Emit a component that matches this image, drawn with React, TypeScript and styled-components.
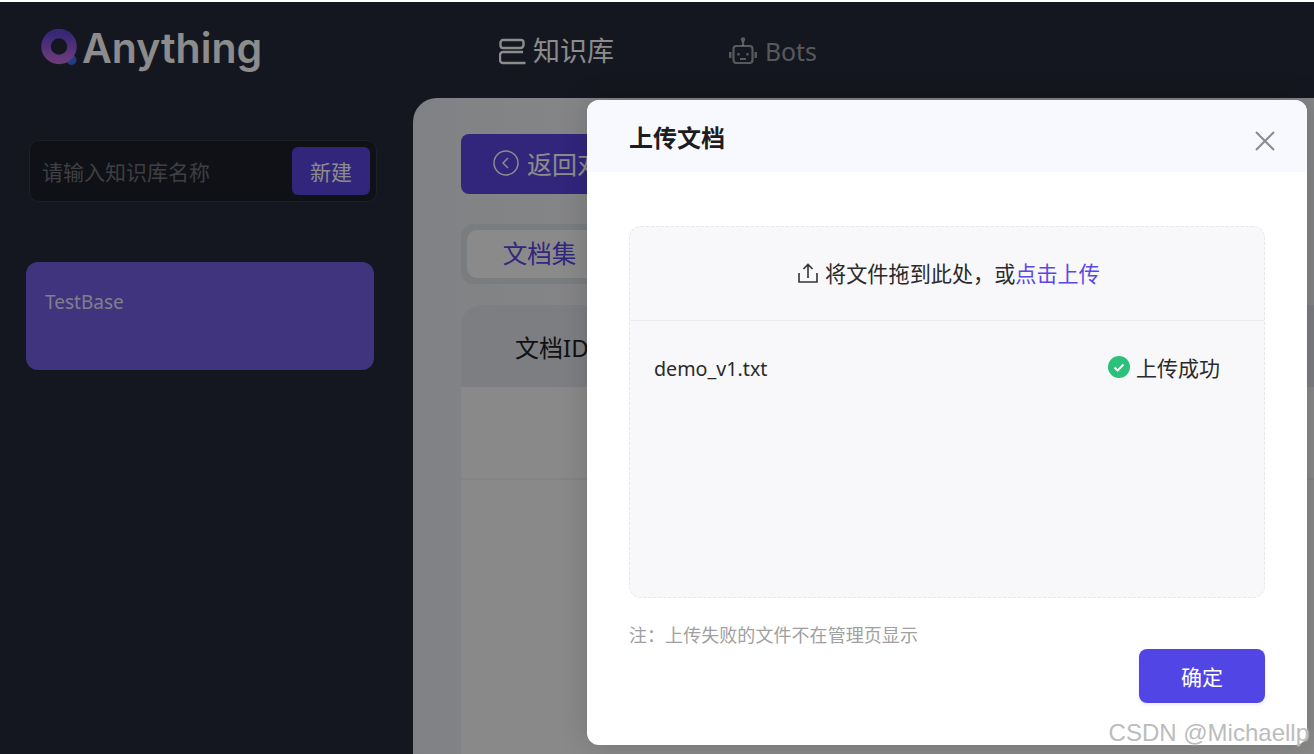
import React from 'react';
import styled, { createGlobalStyle } from 'styled-components';

const Global = createGlobalStyle`
  html, body { margin: 0; padding: 0; height: 754px; overflow: hidden; background: #fff; }
  * { box-sizing: border-box; }
  body { font-family: "Noto Sans", "Noto Sans CJK SC", sans-serif; }
`;
const Page = styled.div`
  position: relative; width: 1314px; height: 754px; padding-top: 2px; background: #fff; overflow: hidden;
  display: flex; flex-direction: column;
`;
const Shell = styled.div`flex: 1; display: flex; flex-direction: column; background: #252a3a; min-height: 0;`;
const Header = styled.header`height: 96px; display: flex; align-items: flex-start; flex: none;`;
const Brand = styled.div`width: 499px; padding: 27px 0 0 41px; display: flex; align-items: center; gap: 4px; flex: none;`;
const LogoMark = styled.svg`margin-bottom: 4px; flex: none;`;
const BrandName = styled.span`font: 600 41px/40px Inter, "Noto Sans", sans-serif; color: #fff; position: relative; top: -1px;`;
const NavItem = styled.div<{ $active?: boolean; $w: number }>`
  width: ${p => p.$w}px; padding-top: 31px; display: flex; align-items: center; gap: ${p => (p.$active ? 7 : 8)}px; flex: none;
  color: ${p => (p.$active ? '#fff' : 'rgba(255,255,255,.58)')};
  font: 400 ${p => (p.$active ? 27 : 24.8)}px/36px "Noto Sans", "Noto Sans CJK SC", sans-serif;
  svg { flex: none; }
`;
const Main = styled.div`flex: 1; display: flex; min-height: 0;`;
const Sidebar = styled.aside`width: 413px; flex: none; padding: 42px 37px 0 26px; display: flex; flex-direction: column; gap: 60px;`;
const Search = styled.div`
  margin-left: 3px; width: 348px; height: 62px; padding: 0 6px 0 12px; border: 1px solid #343946; border-radius: 10px;
  background: #1d2029; display: flex; align-items: center; justify-content: space-between; flex: none;
`;
const Placeholder = styled.span`font-size: 21px; color: rgba(255,255,255,.38);`;
const NewBtn = styled.div`width: 78px; height: 48px; border-radius: 6px; background: #5a44e2; color: #fff; font-size: 21px; display: flex; align-items: center; justify-content: center;`;
const BaseCard = styled.div`width: 348px; height: 108px; border-radius: 12px; background: #7560e8; padding: 25px 19px; font-size: 19px; line-height: 30px; color: rgba(255,255,255,.85); flex: none;`;
const Panel = styled.section`flex: 1; min-width: 0; background: linear-gradient(90deg, #e9ecf2, #f1f2f5 160px); border-radius: 24px 0 0 0; padding: 36px 0 0 48px; display: flex; flex-direction: column; overflow: hidden;`;
const BackBtn = styled.div`width: 220px; height: 60px; padding: 0 0 2px 32px; flex: none; border-radius: 8px; background: #5a44e2; color: #fff; font-size: 25px; display: flex; align-items: center; gap: 8px;`;
const Tabs = styled.div`margin-top: 30px; width: 300px; height: 60px; flex: none; padding: 6px; background: #dfe3ea; border-radius: 12px;`;
const Tab = styled.div`width: 145px; height: 48px; padding-bottom: 3px; border-radius: 10px; background: #fcfcfc; color: #5a47e5; font-size: 24.500px; display: flex; align-items: center; justify-content: center;`;
const Table = styled.div`margin-top: 21px; flex: 1; background: #f9f9f9; border-radius: 20px 0 0 0; overflow: hidden; display: flex; flex-direction: column;`;
const THead = styled.div`height: 82px; flex: none; background: #e3e6ed; padding-left: 54px; display: flex; align-items: center; font-size: 24px; color: #222; span { white-space: nowrap; }`;
const TRow = styled.div`height: 93px; flex: none; border-bottom: 2px solid #efefef;`;
const Scrim = styled.div`position: absolute; inset: 2px 0 0 0; background: rgba(0,0,0,.45);`;
const Modal = styled.div`
  position: absolute; left: 587px; top: 100px; width: 720px; height: 645px; background: #fff; border-radius: 12px; overflow: hidden;
  box-shadow: 0 0 30px rgba(0,0,0,.16); display: flex; flex-direction: column;
`;
const ModalHead = styled.div`height: 72px; flex: none; background: #f8f9fe; padding: 0 32px 0 42px; display: flex; align-items: center; justify-content: space-between;`;
const ModalTitle = styled.h2`margin: 0; font-size: 24px; line-height: 36px; font-weight: 700; color: #1d1d1f; position: relative; top: 2px;`;
const CloseIcon = styled.svg`width: 20px; height: 20px; position: relative; top: 5px;`;
const ModalBody = styled.div`flex: 1; padding: 54px 42px 0; display: flex; flex-direction: column; min-height: 0;`;
const Drop = styled.div`height: 372px; flex: none; border: 1px dashed #e7e8ec; border-radius: 12px; background: #f8f8fb; display: flex; flex-direction: column;`;
const DropHint = styled.div`height: 94px; flex: none; padding: 0 0 2px 4px; border-bottom: 1px solid #ebecef; display: flex; align-items: center; justify-content: center; gap: 7px; font-size: 21.150px; color: #2a2a2a;`;
const Link = styled.span`color: #5a47e5;`;
const FileRow = styled.div`height: 94px; display: flex; align-items: center; justify-content: space-between; padding: 0 44px 0 24px; color: #2a2a2a;`;
const FileName = styled.span`font-size: 19.700px;`;
const FileStatus = styled.span`display: flex; align-items: center; gap: 6px; font-size: 21px; padding-bottom: 3px;`;
const Note = styled.div`margin-top: 24px; font-size: 18px; line-height: 27px; color: #a0a0a0; flex: none; letter-spacing: .06px;`;
const Footer = styled.div`display: flex; justify-content: flex-end;`;
const Confirm = styled.div`width: 126px; height: 54px; padding-bottom: 1px; border-radius: 8px; background: #5146e5; color: #fff; font-size: 21px; display: flex; align-items: center; justify-content: center; box-shadow: 0 2px 3px rgba(120,140,255,.15);`;
const Watermark = styled.div`position: absolute; right: 5px; bottom: 7px; font: 400 24px/28px "Liberation Sans", sans-serif; color: #bcbcbc; text-shadow: 0 0 2px rgba(255,255,255,.9); white-space: nowrap;`;

export default function App() {
  return (
    <Page>
      <Global />
      <Shell>
        <Header>
          <Brand>
            <LogoMark width="37" height="36" viewBox="0 0 37 36">
              <defs>
                <linearGradient id="q" x1="0" y1="0" x2="0" y2="1">
                  <stop offset="0" stopColor="#6448d8" />
                  <stop offset="1" stopColor="#c06adf" />
                </linearGradient>
              </defs>
              <circle cx="30.500" cy="31" r="5" fill="#3d70f5" />
              <circle cx="18" cy="17.500" r="13" fill="none" stroke="url(#q)" strokeWidth="9.500" />
            </LogoMark>
            <BrandName>Anything</BrandName>
          </Brand>
          <NavItem $active $w={230}>
            <svg width="27" height="27" viewBox="0 0 27 27" fill="none" stroke="currentColor" strokeWidth="2.400">
              <path d="M4 2h18a2.500 2.500 0 0 1 2.500 2.500v2.500a3 3 0 0 1-3 3H4a2.500 2.500 0 0 1-2.500-2.500V4.500A2.500 2.500 0 0 1 4 2z" />
              <path d="M24 14H4a3 3 0 0 0-3 3v5a3 3 0 0 0 3 3h22.500" />
            </svg>
            知识库
          </NavItem>
          <NavItem $w={120}>
            <svg width="28" height="28" viewBox="0 0 28 28" fill="none" stroke="currentColor" strokeWidth="2.200">
              <circle cx="14" cy="2.500" r="2.200" fill="currentColor" stroke="none" />
              <path d="M14 4v5" />
              <rect x="4.500" y="9" width="19" height="17" rx="3" />
              <path d="M1 15v6M27 15v6" strokeWidth="3" />
              <path d="M9.500 16v2.500M18.500 16v2.500M11 22h6" />
            </svg>
            Bots
          </NavItem>
        </Header>
        <Main>
          <Sidebar>
            <Search>
              <Placeholder>请输入知识库名称</Placeholder>
              <NewBtn>新建</NewBtn>
            </Search>
            <BaseCard>TestBase</BaseCard>
          </Sidebar>
          <Panel>
            <BackBtn>
              <svg width="26" height="26" viewBox="0 0 26 26" fill="none" stroke="currentColor" strokeWidth="1.500">
                <circle cx="13" cy="13" r="12" />
                <path d="M15 8l-5 5 5 5" />
              </svg>
              返回对话
            </BackBtn>
            <Tabs><Tab>文档集</Tab></Tabs>
            <Table>
              <THead><span>文档ID</span></THead>
              <TRow />
            </Table>
          </Panel>
        </Main>
      </Shell>
      <Scrim />
      <Modal>
        <ModalHead>
          <ModalTitle>上传文档</ModalTitle>
          <CloseIcon viewBox="0 0 20 20" fill="none" stroke="#8b8b8b" strokeWidth="2">
            <path d="M1 1l18 18M19 1L1 19" />
          </CloseIcon>
        </ModalHead>
        <ModalBody>
          <Drop>
            <DropHint>
              <svg width="20" height="20" viewBox="0 0 20 20" fill="none" stroke="#333" strokeWidth="1.600">
                <path d="M1 10v9h18v-9M10 15V1.500M5.500 6L10 1.500 14.500 6" />
              </svg>
              <span>将文件拖到此处，或<Link>点击上传</Link></span>
            </DropHint>
            <FileRow>
              <FileName>demo_v1.txt</FileName>
              <FileStatus>
                <svg width="22" height="22" viewBox="0 0 22 22">
                  <circle cx="11" cy="11" r="11" fill="#2bc17b" />
                  <path d="M6.500 11.500l3.200 3 5.800-6" fill="none" stroke="#fff" strokeWidth="1.800" />
                </svg>
                上传成功
              </FileStatus>
            </FileRow>
          </Drop>
          <Note>注：上传失败的文件不在管理页显示</Note>
          <Footer><Confirm>确定</Confirm></Footer>
        </ModalBody>
      </Modal>
      <Watermark>CSDN @Michaellp</Watermark>
    </Page>
  );
}
